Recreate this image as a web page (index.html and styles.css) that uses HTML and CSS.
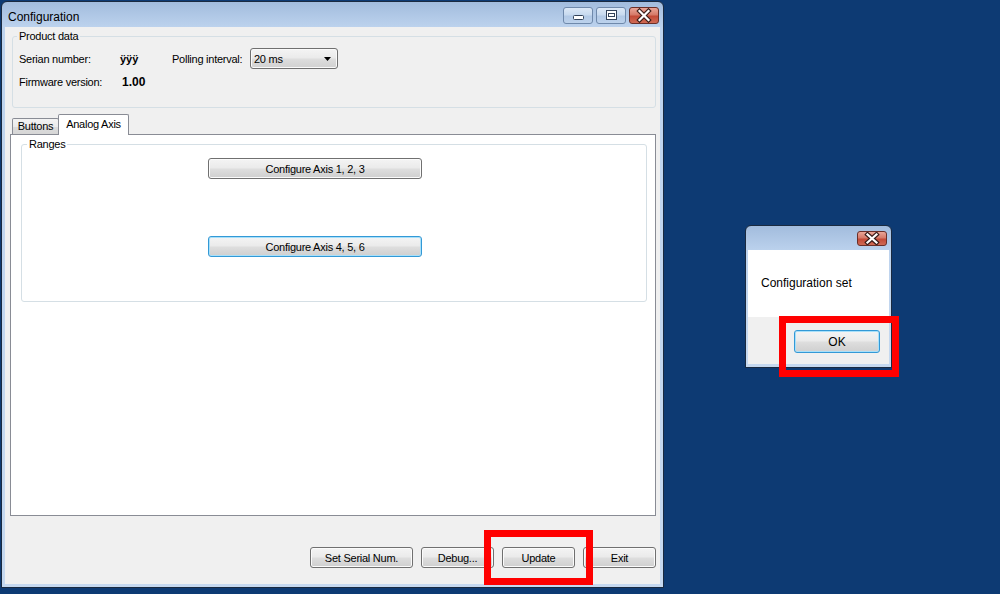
FILE: index.html
```html
<!DOCTYPE html>
<html lang="en">
<head>
    <meta charset="UTF-8">
    <title>Configuration</title>
    <link rel="stylesheet" href="styles.css">
</head>
<body>
    <div class="window main-window">
        <div class="titlebar">
            <span class="title">Configuration</span>
            <div class="caption-buttons">
                <span class="cap-btn">
                    <svg width="30" height="17" viewBox="0 0 30 17"><rect x="10.5" y="8.5" width="10" height="4" rx="1" fill="#fff" stroke="#33435a"/></svg>
                </span>
                <span class="cap-btn">
                    <svg width="30" height="17" viewBox="0 0 30 17"><rect x="10.5" y="3.5" width="10" height="9" fill="#fff" stroke="#33435a"/><rect x="12.5" y="6.5" width="6" height="3" fill="none" stroke="#33435a"/></svg>
                </span>
                <span class="cap-btn cap-close">
                    <svg width="30" height="17" viewBox="0 0 30 17"><path d="M10.5 4 L19.5 13 M19.5 4 L10.5 13" stroke="#3a1d1a" stroke-width="4.5" stroke-linecap="square"/><path d="M10.5 4 L19.5 13 M19.5 4 L10.5 13" stroke="#fff" stroke-width="2.2" stroke-linecap="square"/></svg>
                </span>
            </div>
        </div>
        <div class="client">
            <fieldset class="group product-group">
                <legend>Product data</legend>
                <div class="field-row row-top">
                    <span class="col-label">Serian number:</span>
                    <span class="col-value value-bold">ÿÿÿ</span>
                    <span class="col-poll">Polling interval:</span>
                    <div class="combo">
                        <span>20 ms</span>
                        <svg width="7" height="4" viewBox="0 0 7 4"><path d="M0 0 H7 L3.5 4 Z" fill="#000"/></svg>
                    </div>
                </div>
                <div class="field-row row-bottom">
                    <span class="col-label">Firmware version:</span>
                    <span class="col-value value-version">1.00</span>
                </div>
            </fieldset>

            <div class="tabs">
                <div class="tab-strip">
                    <span class="tab">Buttons</span>
                    <span class="tab active">Analog Axis</span>
                </div>
                <div class="tab-panel">
                    <fieldset class="group ranges-group">
                        <legend>Ranges</legend>
                        <button class="btn axis-btn">Configure Axis 1, 2, 3</button>
                        <button class="btn axis-btn axis-second focused">Configure Axis 4, 5, 6</button>
                    </fieldset>
                </div>
            </div>

            <div class="action-row">
                <button class="btn btn-serial">Set Serial Num.</button>
                <button class="btn">Debug...</button>
                <button class="btn">Update</button>
                <button class="btn">Exit</button>
            </div>
        </div>
    </div>

    <div class="window dialog">
        <div class="titlebar dialog-titlebar">
            <span class="title"></span>
            <div class="caption-buttons">
                <span class="cap-btn cap-close dialog-close">
                    <svg width="30" height="15" viewBox="0 0 30 15"><path d="M10.5 3.5 L19.5 11.5 M19.5 3.5 L10.5 11.5" stroke="#3a1d1a" stroke-width="4.5" stroke-linecap="square"/><path d="M10.5 3.5 L19.5 11.5 M19.5 3.5 L10.5 11.5" stroke="#fff" stroke-width="2.2" stroke-linecap="square"/></svg>
                </span>
            </div>
        </div>
        <div class="dialog-client">
            <div class="dialog-message">Configuration set</div>
            <div class="dialog-footer">
                <button class="btn btn-ok focused">OK</button>
            </div>
        </div>
    </div>

    <div class="highlight hl-update"></div>
    <div class="highlight hl-ok"></div>
</body>
</html>
```

FILE: styles.css
```css
* {
    margin: 0;
    padding: 0;
    box-sizing: border-box;
}

body {
    width: 1000px;
    height: 594px;
    overflow: hidden;
    position: relative;
    background-color: #0d3a73;
    font-family: 'Liberation Sans', Arial, sans-serif;
    font-size: 11px;
    letter-spacing: -0.25px;
    color: #000;
}

/* windows on the desktop */
.window {
    position: absolute;
    display: flex;
    flex-direction: column;
    border: 1px solid #1a2a40;
    border-radius: 6px 6px 0 0;
    padding: 0 3px 3px;
    background: linear-gradient(#a2bcdd, #bdd3ee 26px, #c6d9f0);
}

.main-window {
    left: 1px;
    top: 1px;
    width: 663px;
    height: 587px;
}

.titlebar {
    height: 25px;
    display: flex;
    justify-content: space-between;
    align-items: flex-start;
    padding-left: 3px;
}

.title {
    font-size: 12px;
    letter-spacing: 0;
    line-height: 25px;
    padding-top: 3px;
}

.caption-buttons {
    display: flex;
    gap: 3px;
    margin-top: 5px;
    margin-right: 1px;
}

.cap-btn {
    display: block;
    width: 30px;
    height: 17px;
    border: 1px solid #6f89ab;
    border-radius: 3px;
    background: linear-gradient(#dce8f6, #c8daef 45%, #b2c9e6 55%, #bcd2ec);
    overflow: hidden;
}

.cap-btn svg {
    display: block;
    margin: -1px 0 0 -1px;
}

.cap-close {
    border-color: #6b2f28;
    background: linear-gradient(#e9a597, #d67a69 45%, #c34a37 55%, #cf6a55);
}

.client {
    flex: 1;
    background-color: #f0f0f0;
    display: flex;
    flex-direction: column;
}

/* group boxes */
.group {
    border: 1px solid #d5dfe5;
    border-radius: 3px;
    min-width: 0;
}

.group legend {
    margin-left: 4px;
    padding: 0 2px;
    line-height: 13px;
}

.product-group {
    margin: 3px 4px 0 7px;
    padding: 0 0 19px;
}

.field-row {
    display: flex;
    align-items: center;
    padding-left: 6px;
}

.row-top {
    height: 21px;
    margin-top: 5px;
}

.row-bottom {
    height: 13px;
    margin-top: 6px;
}

.col-label {
    width: 101px;
}

.col-value {
    width: 52px;
}

.value-bold {
    font-weight: bold;
    letter-spacing: 0;
}

.value-version {
    font-weight: bold;
    font-size: 12px;
    letter-spacing: 0;
    padding-left: 2px;
}

.col-poll {
    width: 78px;
}

.combo {
    width: 88px;
    height: 21px;
    border: 1px solid #707070;
    border-radius: 3px;
    background: linear-gradient(#f4f4f4, #ebebeb 45%, #dddddd 55%, #d1d1d1);
    box-shadow: inset 0 0 0 1px #fafafa;
    display: flex;
    align-items: center;
    justify-content: space-between;
    padding: 0 6px 0 3px;
}

/* tabs */
.tabs {
    margin: 6px 4px 0 5px;
    display: flex;
    flex-direction: column;
}

.tab-strip {
    height: 20px;
    display: flex;
    align-items: flex-end;
    padding-left: 2px;
}

.tab {
    height: 16px;
    width: 47px;
    border: 1px solid #898c95;
    border-bottom: none;
    border-radius: 2px 2px 0 0;
    background: linear-gradient(#f3f3f3, #ebebeb 50%, #dcdcdc 50%, #d6d6d6);
    text-align: center;
    line-height: 15px;
}

.tab.active {
    position: relative;
    z-index: 1;
    width: 71px;
    height: 21px;
    margin-left: -1px;
    margin-bottom: -1px;
    background: #fff;
    line-height: 19px;
}

.tab-panel {
    height: 382px;
    border: 1px solid #898c95;
    background-color: #fff;
    padding-top: 3px;
}

.ranges-group {
    margin: 0 8px 0 10px;
    padding: 0 0 44px;
    display: flex;
    flex-direction: column;
    align-items: flex-start;
}

.ranges-group legend {
    margin-left: 5px;
}

/* buttons */
.btn {
    font-family: 'Liberation Sans', Arial, sans-serif;
    font-size: 11px;
    letter-spacing: -0.25px;
    color: #000;
    height: 21px;
    width: 73px;
    border: 1px solid #707070;
    border-radius: 3px;
    background: linear-gradient(#f4f4f4, #ebebeb 45%, #dddddd 55%, #cfcfcf);
    box-shadow: inset 0 0 0 1px #fbfbfb;
}

.btn.focused {
    border-color: #3399d6;
    box-shadow: inset 0 0 0 1px #a8e0fa;
}

.axis-btn {
    width: 214px;
    margin: 7px 0 0 186px;
}

.axis-second {
    margin-top: 57px;
}

.action-row {
    display: flex;
    justify-content: flex-end;
    gap: 8px;
    margin-top: 31px;
    padding-right: 4px;
}

.btn-serial {
    width: 103px;
}

/* message box */
.dialog {
    left: 745px;
    top: 225px;
    width: 147px;
    height: 143px;
    padding: 0 2px 3px;
}

.dialog-titlebar {
    height: 24px;
}

.dialog-titlebar .caption-buttons {
    margin-top: 5px;
    margin-right: 2px;
}

.dialog-close {
    height: 15px;
}

.dialog-client {
    flex: 1;
    background-color: #f0f0f0;
    display: flex;
    flex-direction: column;
}

.dialog-message {
    height: 67px;
    background-color: #fff;
    font-size: 12px;
    letter-spacing: 0;
    line-height: 67px;
    padding-left: 13px;
}

.dialog-footer {
    display: flex;
    justify-content: flex-end;
    padding: 13px 9px 0 0;
}

.btn-ok {
    width: 86px;
    height: 23px;
    font-size: 12px;
    letter-spacing: 0;
}

/* red marks laid over the screenshot */
.highlight {
    position: absolute;
    border: 7px solid #ff0000;
}

.hl-update {
    left: 484px;
    top: 530px;
    width: 109px;
    height: 55px;
}

.hl-ok {
    left: 779px;
    top: 316px;
    width: 120px;
    height: 61px;
}
```
